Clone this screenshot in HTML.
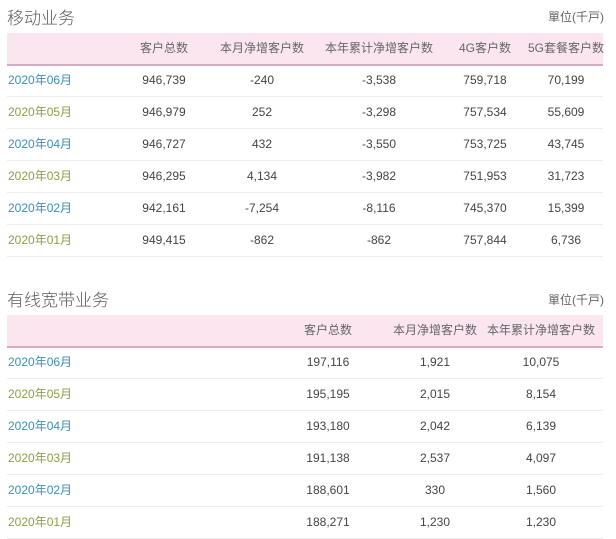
<!DOCTYPE html>
<html><head><meta charset="utf-8"><style>
body{margin:0;width:616px;height:539px;background:#fff;font-family:"Liberation Sans","Noto Sans CJK SC",sans-serif;color:#444;position:relative;overflow:hidden}
.t{position:absolute;font-size:17px;color:#5a5a5a;font-weight:300}
.u{position:absolute;font-size:12px;color:#666;right:12px}
.hd{position:absolute;left:7px;width:596px;height:31px;background:#fbe5ef;border-bottom:2px solid #d8a9c2}
.row{position:absolute;left:7px;width:596px;height:31px;border-bottom:1px solid #ececec}
.c{position:absolute;top:0;line-height:31px;font-size:12px;transform:translateX(-50%);white-space:nowrap}
.h .c{color:#666}
.d{position:absolute;left:1px;line-height:31px;font-size:12px}
.b{color:#3b8fb5}.g{color:#8a9f45}
</style></head><body>
<div class="t" style="left:7px;top:4px">移动业务</div>
<div class="u" style="top:8px">單位(千戸)</div>
<div class="hd h" style="top:33px">
<div class="c" style="left:157px">客户总数</div><div class="c" style="left:255px">本月净增客户数</div><div class="c" style="left:372px">本年累计净增客户数</div><div class="c" style="left:478px">4G客户数</div><div class="c" style="left:559px">5G套餐客户数</div>
</div>
<div class="row" style="top:65px"><span class="d b">2020年06月</span><div class="c" style="left:157px">946,739</div><div class="c" style="left:255px">-240</div><div class="c" style="left:372px">-3,538</div><div class="c" style="left:478px">759,718</div><div class="c" style="left:559px">70,199</div></div>
<div class="row" style="top:97px"><span class="d g">2020年05月</span><div class="c" style="left:157px">946,979</div><div class="c" style="left:255px">252</div><div class="c" style="left:372px">-3,298</div><div class="c" style="left:478px">757,534</div><div class="c" style="left:559px">55,609</div></div>
<div class="row" style="top:129px"><span class="d b">2020年04月</span><div class="c" style="left:157px">946,727</div><div class="c" style="left:255px">432</div><div class="c" style="left:372px">-3,550</div><div class="c" style="left:478px">753,725</div><div class="c" style="left:559px">43,745</div></div>
<div class="row" style="top:161px"><span class="d g">2020年03月</span><div class="c" style="left:157px">946,295</div><div class="c" style="left:255px">4,134</div><div class="c" style="left:372px">-3,982</div><div class="c" style="left:478px">751,953</div><div class="c" style="left:559px">31,723</div></div>
<div class="row" style="top:193px"><span class="d b">2020年02月</span><div class="c" style="left:157px">942,161</div><div class="c" style="left:255px">-7,254</div><div class="c" style="left:372px">-8,116</div><div class="c" style="left:478px">745,370</div><div class="c" style="left:559px">15,399</div></div>
<div class="row" style="top:225px"><span class="d g">2020年01月</span><div class="c" style="left:157px">949,415</div><div class="c" style="left:255px">-862</div><div class="c" style="left:372px">-862</div><div class="c" style="left:478px">757,844</div><div class="c" style="left:559px">6,736</div></div>

<div class="t" style="left:7px;top:286px">有线宽带业务</div>
<div class="u" style="top:291px">單位(千戸)</div>
<div class="hd h" style="top:315px">
<div class="c" style="left:321px">客户总数</div><div class="c" style="left:428px">本月净增客户数</div><div class="c" style="left:534px">本年累计净增客户数</div>
</div>
<div class="row" style="top:347px"><span class="d b">2020年06月</span><div class="c" style="left:321px">197,116</div><div class="c" style="left:428px">1,921</div><div class="c" style="left:534px">10,075</div></div>
<div class="row" style="top:379px"><span class="d g">2020年05月</span><div class="c" style="left:321px">195,195</div><div class="c" style="left:428px">2,015</div><div class="c" style="left:534px">8,154</div></div>
<div class="row" style="top:411px"><span class="d b">2020年04月</span><div class="c" style="left:321px">193,180</div><div class="c" style="left:428px">2,042</div><div class="c" style="left:534px">6,139</div></div>
<div class="row" style="top:443px"><span class="d g">2020年03月</span><div class="c" style="left:321px">191,138</div><div class="c" style="left:428px">2,537</div><div class="c" style="left:534px">4,097</div></div>
<div class="row" style="top:475px"><span class="d b">2020年02月</span><div class="c" style="left:321px">188,601</div><div class="c" style="left:428px">330</div><div class="c" style="left:534px">1,560</div></div>
<div class="row" style="top:507px"><span class="d g">2020年01月</span><div class="c" style="left:321px">188,271</div><div class="c" style="left:428px">1,230</div><div class="c" style="left:534px">1,230</div></div>
</body></html>
